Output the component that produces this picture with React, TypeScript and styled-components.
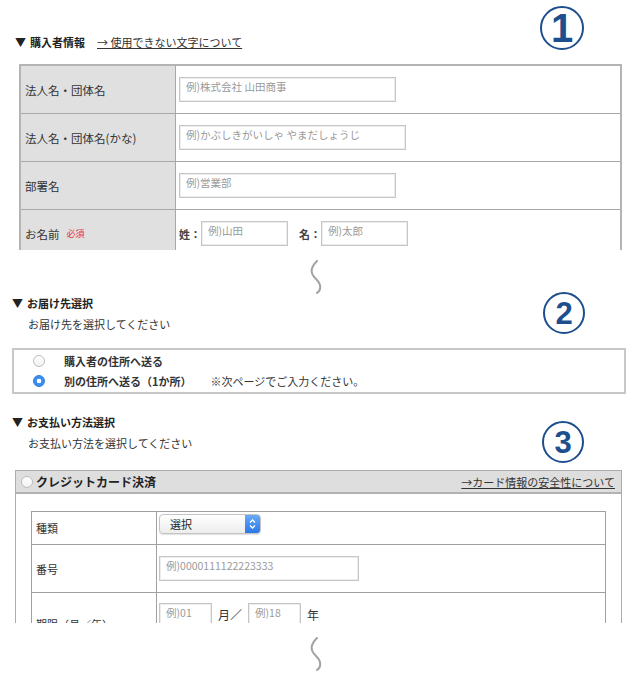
import React from "react";
import styled, { createGlobalStyle } from "styled-components";

const GlobalStyle = createGlobalStyle`
  html, body { margin: 0; padding: 0; background: #fff; }
  body {
    font-family: "Noto Sans CJK JP", "Noto Sans", sans-serif;
    font-size: 11px;
    color: #333;
  }
`;

const Page = styled.div`
  position: relative;
  width: 635px;
  height: 675px;
  overflow: hidden;
`;

const Section = styled.section<{ $top: number }>`
  padding-top: ${p => p.$top}px;
`;

const Heading = styled.div<{ $indent: number }>`
  display: flex;
  align-items: center;
  gap: 12px;
  height: 16px;
  line-height: 16px;
  padding-left: ${p => p.$indent}px;
  font-size: 11px;
  font-weight: 700;
  color: #222;
`;

const Arrow = styled.span`
  margin-right: 4px;
`;

const HeadLink = styled.a`
  font-weight: 400;
  color: #333;
  text-decoration: underline;
`;

const Sub = styled.div`
  margin: 5px 0 0 28px;
  line-height: 16px;
`;

const Badge = styled.div<{ $x: number; $y: number; $d: number; $fs: number }>`
  position: absolute;
  left: ${p => p.$x}px;
  top: ${p => p.$y}px;
  width: ${p => p.$d}px;
  height: ${p => p.$d}px;
  box-sizing: border-box;
  border: 2px solid #1d4f8e;
  border-radius: 50%;
  display: flex;
  align-items: center;
  justify-content: center;
  font-family: "Liberation Sans", Arial, sans-serif;
  font-weight: 700;
  font-size: ${p => p.$fs}px;
  line-height: 1;
  color: #1d4f8e;
`;

const Clip = styled.div<{ $h: number; $mt: number }>`
  margin-top: ${p => p.$mt}px;
  height: ${p => p.$h}px;
  overflow: hidden;
`;

/* section 1 */
const FormTable = styled.div`
  margin-left: 19px;
  width: 603px;
  box-sizing: border-box;
  border: 2px solid #b4b4b4;
`;

const FormRow = styled.div`
  display: grid;
  grid-template-columns: 155px 1fr;
  height: 47px;
  & + & { border-top: 1px solid #a8a8a8; }
`;

const Label = styled.div`
  display: flex;
  align-items: center;
  gap: 7px;
  padding-left: 4px;
  background: #e0e0e0;
  border-right: 1px solid #a8a8a8;
  font-size: 11.5px;
  color: #333;
`;

const Required = styled.span`
  font-size: 9px;
  color: #e8323c;
`;

const Cell = styled.div`
  display: flex;
  align-items: center;
  padding-left: 3px;
`;

const TextInput = styled.input<{ $w: number }>`
  width: ${p => p.$w}px;
  height: 25px;
  box-sizing: border-box;
  border: 1px solid #c6c6c6;
  box-shadow: inset 0 0 0 1px #ececec;
  padding: 0 6px 7px;
  font-family: inherit;
  font-size: 10.5px;
  color: #333;
  background: #fff;
  outline: none;
  &::placeholder { color: #9a9a9a; }
`;

const NamePart = styled.span`
  font-weight: 700;
  font-size: 11px;
  width: 22px;
  color: #444;
`;

const Spacer = styled.span<{ $w: number }>`
  display: inline-block;
  width: ${p => p.$w}px;
`;

/* wave separator */
const WaveBox = styled.div<{ $h: number; $pt: number }>`
  height: ${p => p.$h}px;
  padding-top: ${p => p.$pt}px;
  box-sizing: border-box;
  display: flex;
  justify-content: center;
  padding-right: 4px;
`;

const Wave = ({ h, pt }: { h: number; pt: number }) => (
  <WaveBox $h={h} $pt={pt}>
    <svg width="20" height="34" viewBox="0 0 20 34">
      <path d="M11 1 C4 8, 4 13, 10 19 C16 25, 15 30, 11 33" fill="none" stroke="#a3a3a3" strokeWidth="2" strokeLinecap="round" />
    </svg>
  </WaveBox>
);

/* section 2 */
const ChoiceBox = styled.div`
  margin: 16px 9px 0 12px;
  border: 2px solid #c8c8c8;
  padding: 1px 0;
`;

const Choice = styled.div`
  display: flex;
  align-items: center;
  height: 20px;
  padding-left: 19px;
  font-weight: 700;
  color: #333;
`;

const Radio = styled.span<{ $on?: boolean; $gap: number }>`
  flex: none;
  width: 12px;
  height: 12px;
  box-sizing: border-box;
  border-radius: 50%;
  border: 1px solid ${p => (p.$on ? "#2d7be0" : "#bdbdbd")};
  background: ${p =>
    p.$on
      ? "radial-gradient(circle, #fff 0 2px, #3a8ef2 2.6px)"
      : "linear-gradient(#fff, #f2f2f2)"};
  margin-right: ${p => p.$gap}px;
`;

const Note = styled.span`
  font-weight: 400;
  margin-left: 19px;
`;

/* section 3 */
const CardBox = styled.div`
  margin: 19px 13px 0 15px;
  height: 152px;
  overflow: hidden;
  border: 1px solid #acacac;
  border-bottom: none;
`;

const CardHeader = styled.div`
  display: flex;
  align-items: center;
  height: 21px;
  padding: 0 6px 0 5px;
  background: #dedede;
  border-bottom: 2px solid #b2b2b2;
`;

const CardTitle = styled.span`
  font-size: 12px;
  font-weight: 700;
  color: #222;
`;

const CardLink = styled.a`
  margin-left: auto;
  color: #333;
  text-decoration: underline;
  font-size: 11px;
`;

const CardBody = styled.div`
  padding: 17px 15px 0 15px;
`;

const CardTable = styled.div`
  border: 1px solid #a0a0a0;
`;

const CardRow = styled.div<{ $h: number; $pt?: number }>`
  display: grid;
  grid-template-columns: 125px 1fr;
  height: ${p => p.$h}px;
  & + & { border-top: 1px solid #a0a0a0; }
  & > div:last-child {
    align-items: ${p => (p.$pt !== undefined ? "flex-start" : "center")};
    padding-top: ${p => p.$pt ?? 0}px;
  }
`;

const CardLabel = styled.div`
  display: flex;
  align-items: center;
  padding-left: 4px;
  border-right: 1px solid #a0a0a0;
  font-size: 11px;
`;

const CardCell = styled.div`
  display: flex;
  padding-left: 2px;
`;

const Select = styled.div`
  display: flex;
  width: 102px;
  height: 20px;
  box-sizing: border-box;
  border: 1px solid #c4c4c4;
  border-radius: 4px;
  overflow: hidden;
  background: linear-gradient(#ffffff, #ededed);
  box-shadow: 0 1px 1px rgba(0, 0, 0, 0.12);
`;

const SelectText = styled.span`
  flex: 1;
  padding-left: 10px;
  line-height: 18px;
  font-size: 11px;
  color: #222;
`;

const SelectArrow = styled.span`
  width: 15px;
  display: flex;
  align-items: center;
  justify-content: center;
  background: linear-gradient(#6aaaf7, #2b79e6);
`;

const Unit = styled.span`
  font-size: 12px;
  line-height: 24px;
  margin: 0 6px;
  color: #333;
`;

const App = () => {
  return (
    <>
      <GlobalStyle />
      <Page>
        <Section $top={34}>
          <Heading $indent={15}>
            <span><Arrow>▼</Arrow>購入者情報</span>
            <HeadLink>→ 使用できない文字について</HeadLink>
          </Heading>
          <Clip $mt={14} $h={186}>
            <FormTable>
              <FormRow>
                <Label>法人名・団体名</Label>
                <Cell><TextInput $w={217} placeholder="例)株式会社 山田商事" /></Cell>
              </FormRow>
              <FormRow>
                <Label>法人名・団体名(かな)</Label>
                <Cell><TextInput $w={227} placeholder="例)かぶしきがいしゃ やまだしょうじ" /></Cell>
              </FormRow>
              <FormRow>
                <Label>部署名</Label>
                <Cell><TextInput $w={217} placeholder="例)営業部" /></Cell>
              </FormRow>
              <FormRow>
                <Label>
                  お名前<Required>必須</Required>
                </Label>
                <Cell>
                  <NamePart>姓：</NamePart>
                  <TextInput $w={87} placeholder="例)山田" />
                  <Spacer $w={11} />
                  <NamePart>名：</NamePart>
                  <TextInput $w={87} placeholder="例)太郎" />
                </Cell>
              </FormRow>
            </FormTable>
          </Clip>
        </Section>

        <Wave h={45} pt={10} />

        <Section $top={0}>
          <Heading $indent={12}><span><Arrow>▼</Arrow>お届け先選択</span></Heading>
          <Sub>お届け先を選択してください</Sub>
          <ChoiceBox>
            <Choice>
              <Radio $gap={19} />
              購入者の住所へ送る
            </Choice>
            <Choice>
              <Radio $on $gap={19} />
              別の住所へ送る（1か所）
              <Note>※次ページでご入力ください。</Note>
            </Choice>
          </ChoiceBox>
        </Section>

        <Section $top={20}>
          <Heading $indent={12}><span><Arrow>▼</Arrow>お支払い方法選択</span></Heading>
          <Sub>お支払い方法を選択してください</Sub>
          <CardBox>
            <CardHeader>
              <Radio $gap={3} />
              <CardTitle>クレジットカード決済</CardTitle>
              <CardLink>→カード情報の安全性について</CardLink>
            </CardHeader>
            <CardBody>
              <CardTable>
                <CardRow $h={32} $pt={2}>
                  <CardLabel>種類</CardLabel>
                  <CardCell>
                    <Select>
                      <SelectText>選択</SelectText>
                      <SelectArrow>
                        <svg width="7" height="12" viewBox="0 0 7 12">
                          <path d="M1 4.5 L3.5 2 L6 4.5 M1 7.5 L3.5 10 L6 7.5" fill="none" stroke="#fff" strokeWidth="1.3" />
                        </svg>
                      </SelectArrow>
                    </Select>
                  </CardCell>
                </CardRow>
                <CardRow $h={47}>
                  <CardLabel>番号</CardLabel>
                  <CardCell>
                    <TextInput $w={200} placeholder="例)0000111122223333" />
                  </CardCell>
                </CardRow>
                <CardRow $h={62} $pt={10}>
                  <CardLabel>期限（月／年）</CardLabel>
                  <CardCell>
                    <TextInput $w={53} placeholder="例)01" />
                    <Unit>月／</Unit>
                    <TextInput $w={53} placeholder="例)18" />
                    <Unit>年</Unit>
                  </CardCell>
                </CardRow>
              </CardTable>
            </CardBody>
          </CardBox>
        </Section>

        <Wave h={53} pt={14} />

        <Badge $x={540} $y={6} $d={44} $fs={40}>1</Badge>
        <Badge $x={543} $y={292} $d={42} $fs={31}>2</Badge>
        <Badge $x={542} $y={421} $d={42} $fs={31}>3</Badge>
      </Page>
    </>
  );
};

export default App;
